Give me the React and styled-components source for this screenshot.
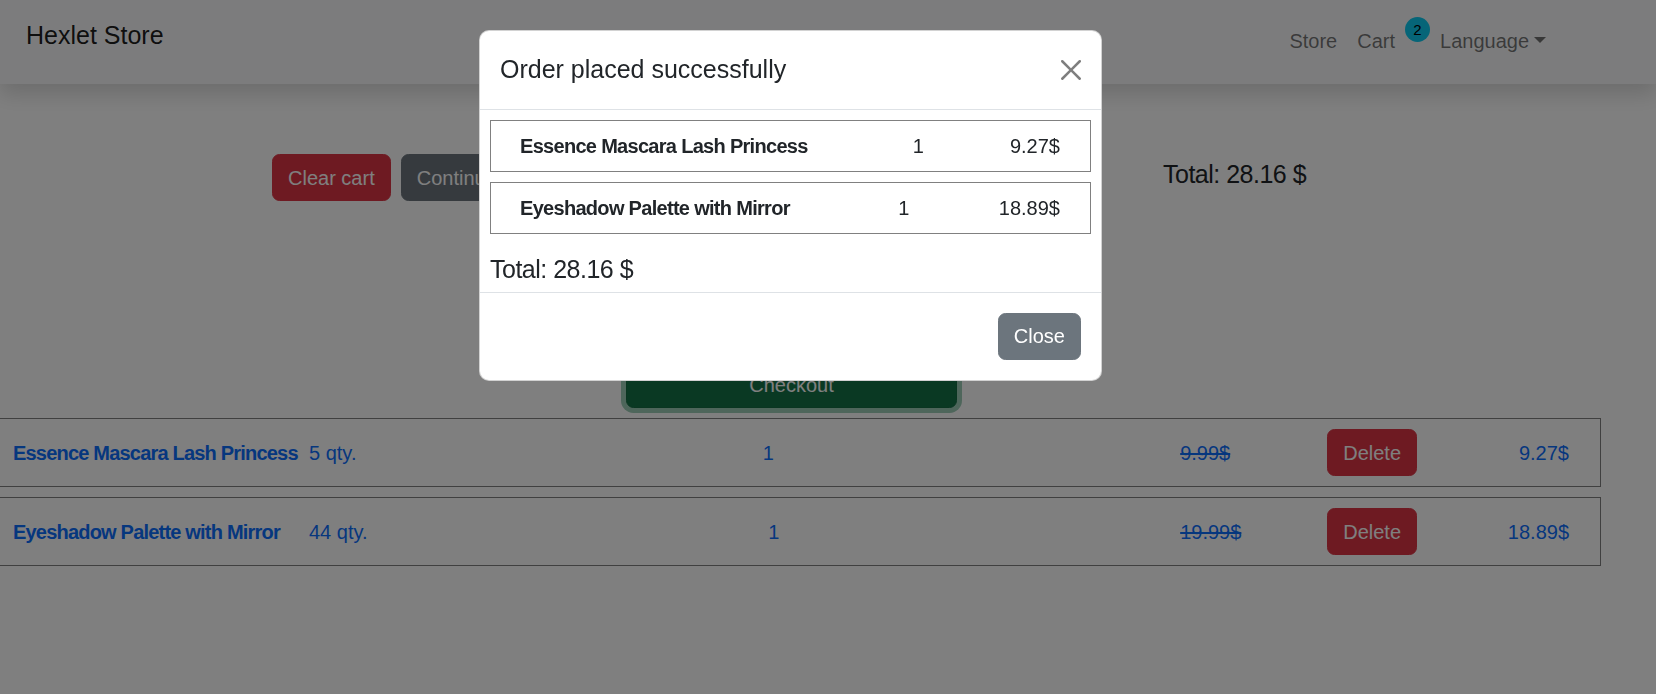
import React from 'react'
import styled, { createGlobalStyle } from 'styled-components'

const GlobalStyle = createGlobalStyle`
  * { box-sizing: border-box; }
  html, body { margin: 0; padding: 0; }
  body {
    width: 1656px;
    height: 694px;
    overflow: hidden;
    font-family: "Liberation Sans", Arial, sans-serif;
    font-size: 20px;
    line-height: 1.5;
    color: #212529;
    background: #fff;
  }
`

const cartItems = [
    { name: 'Essence Mascara Lash Princess', stock: 5, count: 1, oldPrice: '9.99$', price: '9.27$' },
    { name: 'Eyeshadow Palette with Mirror', stock: 44, count: 1, oldPrice: '19.99$', price: '18.89$' },
]

// buttons share the bootstrap look, variant picks the colour
const variants = {
    danger: { bg: '#dc3545', border: '#dc3545' },
    secondary: { bg: '#6c757d', border: '#6c757d' },
    success: { bg: '#157347', border: '#146c43' },
}

const Button = styled.button`
    display: inline-block;
    font-family: inherit;
    font-size: 20px;
    line-height: 30px;
    padding: 7.5px 15px;
    border-radius: 7.5px;
    color: #fff;
    white-space: nowrap;
    cursor: pointer;
    background: ${props => variants[props.$variant].bg};
    border: 1px solid ${props => variants[props.$variant].border};
`

const Navbar = styled.nav`
    position: relative;
    z-index: 1;
    display: flex;
    align-items: flex-start;
    justify-content: space-between;
    height: 84px;
    padding: 11px 100px 0 26px;
    background: #f8f9fa;
    box-shadow: 0 10px 20px rgba(0, 0, 0, .15);
`
const Brand = styled.a`
    font-size: 25px;
    line-height: 37.5px;
    padding: 6.25px 0;
    color: rgba(0, 0, 0, .9);
    text-decoration: none;
`
const NavLinks = styled.div`
    display: flex;
    align-items: center;
    margin-top: 5px;
`
const NavLink = styled.a`
    padding: 10px;
    line-height: 30px;
    color: rgba(0, 0, 0, .55);
    text-decoration: none;
    ${props => props.$dropdown && `
        &::after {
            content: "";
            display: inline-block;
            margin-left: 5px;
            vertical-align: 5px;
            border-top: 6px solid;
            border-right: 6px solid transparent;
            border-left: 6px solid transparent;
        }
    `}
`
const Badge = styled.span`
    position: relative;
    top: -12px;
    display: inline-flex;
    align-items: center;
    justify-content: center;
    width: 25px;
    height: 25px;
    border-radius: 50%;
    background: #0dcaf0;
    color: #000;
    font-size: 15px;
    line-height: 1;
`

const Summary = styled.section`
    display: flex;
    align-items: flex-start;
    padding: 70px 0 0 272px;
`
const Actions = styled.div`
    display: flex;
    gap: 10px;
    width: 354px;
`
const CheckoutForm = styled.form`
    width: 331px;
    display: flex;
    flex-direction: column;
`
const Field = styled.input`
    height: 47px;
    margin-bottom: 15px;
    padding: 7.5px 15px;
    font-family: inherit;
    font-size: 20px;
    border: 1px solid #dee2e6;
    border-radius: 7.5px;
`
const CheckoutButton = styled(Button)`
    width: 100%;
    margin-top: 21px;
    box-shadow: 0 0 0 5px rgba(60, 153, 110, .5);
`
const Total = styled.h5`
    margin: 5px 0 0 206px;
    font-size: 25px;
    font-weight: 500;
    line-height: 30px;
    letter-spacing: -0.5px;
    white-space: nowrap;
`

const ProductList = styled.div`
    margin: 10px 0 0 -15px;
    width: 1616px;
`
const ProductRow = styled.div`
    display: flex;
    align-items: center;
    height: 69px;
    margin-bottom: 10px;
    padding: 0 31px 0 27px;
    border: 1px solid gray;
    color: #0d6efd;
`
const ProductName = styled.a`
    flex: none;
    width: 296px;
    font-weight: 700;
    letter-spacing: -0.8px;
    color: #0d6efd;
    text-decoration: none;
    white-space: nowrap;
`
const Count = styled.span`
    flex: 1;
    text-align: center;
`
const OldPrice = styled.s`
    width: 147px;
`
const Price = styled.span`
    width: 152px;
    text-align: right;
`

const Backdrop = styled.div`
    position: fixed;
    inset: 0;
    z-index: 10;
    background: rgba(0, 0, 0, .5);
`
const ModalLayer = styled.div`
    position: fixed;
    inset: 0;
    z-index: 11;
    padding: 30px 0 0 479px;
`
const Dialog = styled.div`
    width: 623px;
    background: #fff;
    border: 1px solid rgba(0, 0, 0, .175);
    border-radius: 10px;
`
const ModalHeader = styled.div`
    display: flex;
    align-items: center;
    padding: 20px;
    border-bottom: 1px solid #dee2e6;
`
const ModalTitle = styled.h5`
    margin: 0;
    font-size: 25px;
    font-weight: 500;
    line-height: 37.5px;
`
const CloseX = styled.button`
    display: flex;
    margin: -10px -10px -10px auto;
    padding: 10px;
    border: 0;
    background: transparent;
    opacity: .5;
    cursor: pointer;
`
const ModalBody = styled.div`
    padding: 10px 10px 0;
`
const OrderItem = styled.div`
    display: flex;
    align-items: center;
    justify-content: space-between;
    margin-bottom: 10px;
    padding: 10px 30px 10px 29px;
    border: 1px solid gray;
    line-height: 30px;
`
const OrderName = styled.span`
    font-weight: 700;
    letter-spacing: -0.7px;
`
const OrderCount = styled.span`
    width: 25px;
    margin-left: 19px;
    text-align: center;
`
const OrderTotal = styled.h5`
    margin: 20px 0 8px;
    font-size: 25px;
    font-weight: 500;
    line-height: 30px;
    letter-spacing: -0.5px;
`
const ModalFooter = styled.div`
    display: flex;
    justify-content: flex-end;
    padding: 15px;
    border-top: 1px solid #dee2e6;
    & > button { margin: 5px; }
`

const App = () => {
    return (
        <>
            <GlobalStyle />
            <Navbar>
                <Brand href="#">Hexlet Store</Brand>
                <NavLinks>
                    <NavLink href="#">Store</NavLink>
                    <NavLink href="#">Cart</NavLink>
                    <Badge>2</Badge>
                    <NavLink href="#" $dropdown>Language</NavLink>
                </NavLinks>
            </Navbar>

            <main>
                <Summary>
                    <Actions>
                        <Button $variant="danger">Clear cart</Button>
                        <Button $variant="secondary">Continue shopping</Button>
                    </Actions>
                    <CheckoutForm>
                        <Field placeholder="Name" />
                        <Field placeholder="Phone" />
                        <Field placeholder="Address" />
                        <CheckoutButton type="button" $variant="success">Checkout</CheckoutButton>
                    </CheckoutForm>
                    <Total>Total: 28.16 $</Total>
                </Summary>

                <ProductList>
                    {cartItems.map((item, i) => (
                        <ProductRow key={i}>
                            <ProductName href="#">{item.name}</ProductName>
                            <span>{item.stock} qty.</span>
                            <Count>{item.count}</Count>
                            <OldPrice>{item.oldPrice}</OldPrice>
                            <Button $variant="danger">Delete</Button>
                            <Price>{item.price}</Price>
                        </ProductRow>
                    ))}
                </ProductList>
            </main>

            <Backdrop />
            <ModalLayer>
                <Dialog>
                    <ModalHeader>
                        <ModalTitle>Order placed successfully</ModalTitle>
                        <CloseX aria-label="Close">
                            <svg width="20" height="20" viewBox="0 0 16 16" fill="#000">
                                <path d="M.293.293a1 1 0 0 1 1.414 0L8 6.586 14.293.293a1 1 0 1 1 1.414 1.414L9.414 8l6.293 6.293a1 1 0 0 1-1.414 1.414L8 9.414l-6.293 6.293a1 1 0 0 1-1.414-1.414L6.586 8 .293 1.707a1 1 0 0 1 0-1.414z" />
                            </svg>
                        </CloseX>
                    </ModalHeader>
                    <ModalBody>
                        {cartItems.map((item, i) => (
                            <OrderItem key={i}>
                                <OrderName>{item.name}</OrderName>
                                <OrderCount>{item.count}</OrderCount>
                                <span>{item.price}</span>
                            </OrderItem>
                        ))}
                        <OrderTotal>Total: 28.16 $</OrderTotal>
                    </ModalBody>
                    <ModalFooter>
                        <Button $variant="secondary">Close</Button>
                    </ModalFooter>
                </Dialog>
            </ModalLayer>
        </>
    )
}

export default App
